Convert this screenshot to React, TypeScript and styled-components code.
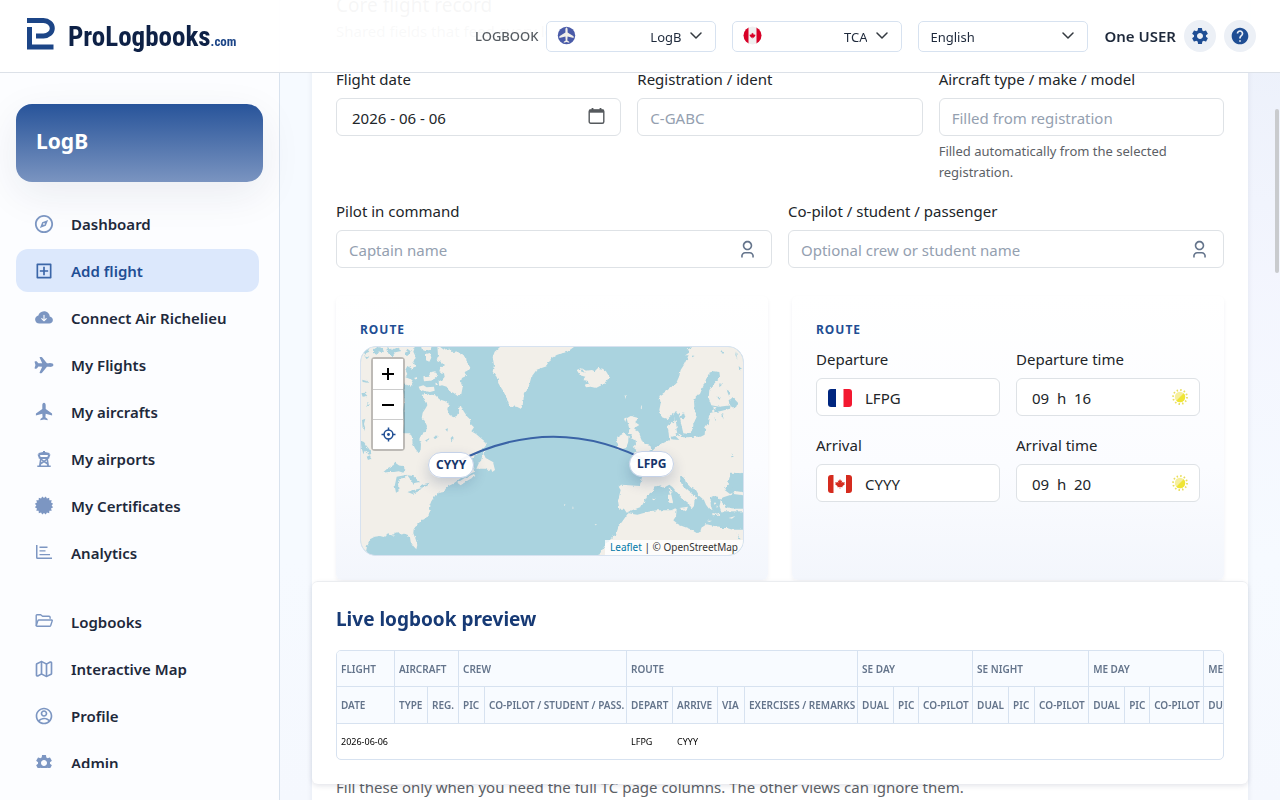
import React, { useLayoutEffect, useRef } from "react";
import styled, { createGlobalStyle } from "styled-components";
import { RiAccountCircleLine, RiAddBoxLine, RiCompass3Line, RiUser3Line } from "react-icons/ri";
import { IoAirplane } from "react-icons/io5";
import { MdSettings, MdHelp } from "react-icons/md";
import { BsCloudArrowDownFill } from "react-icons/bs";
import { Map as MapIcon } from "lucide-react";

const GlobalStyle = createGlobalStyle`
  *, *::before, *::after { box-sizing: border-box; }
  body {
    margin: 0;
    font-family: "Noto Sans", "Open Sans", sans-serif;
    font-size: 15px;
    line-height: 24px;
    color: #212529;
    background: #f6f9ff;
  }
  button, input, select { font: inherit; color: inherit; }
  h2, h3, p { margin: 0; }
`;

/* ---------- shell ---------- */

const Shell = styled.div`
  display: grid;
  grid-template-columns: 280px minmax(0, 1fr);
  height: 100vh;
  background:
    radial-gradient(circle at 100% 0, #ebf0fa, rgba(243, 245, 254, 0.9) 280px, rgba(246, 250, 255, 0) 560px),
    linear-gradient(180deg, #f6faff 70%, #f5f8fe);
`;

const Header = styled.header`
  position: fixed;
  z-index: 10;
  top: 0;
  left: 0;
  right: 0;
  height: 73px;
  display: flex;
  align-items: center;
  justify-content: space-between;
  padding: 0 24px;
  border-bottom: 1px solid #dce1e8;
  background: rgba(255, 255, 255, 0.96);
`;

const Brand = styled.a`
  display: flex;
  align-items: center;
  gap: 13px;
  padding: 6px 0 0 2px;
  text-decoration: none;
  font-family: "Roboto Condensed", "Open Sans Condensed", Roboto, sans-serif;
  font-size: 27px;
  font-weight: 700;
  line-height: 40px;
  color: #0e2146;
  > svg { margin-bottom: 12px; }
`;

const BrandSuffix = styled.span`
  font-size: 13px;
  color: #1c4587;
`;

const Tools = styled.div`
  display: flex;
  align-items: center;
  gap: 16px;
  font-size: 13px;
  color: #1e293b;
`;

const BookPicker = styled.label`
  display: flex;
  align-items: center;
  gap: 8px;
  font-weight: 500;
  color: #555b61;
`;

const Picker = styled.span`
  position: relative;
  display: block;
  width: 170px;
  > svg { position: absolute; pointer-events: none; }
  > svg:first-child { left: 11px; top: 5px; }
  > svg:last-child { right: 14px; top: 9px; }
`;

const PickerSelect = styled.select<{ $end?: boolean }>`
  display: block;
  width: 100%;
  height: 31px;
  padding: 2px 34px 0 11px;
  appearance: none;
  border: 1px solid #d7e2f0;
  border-radius: 5px;
  background: #fff;
  font-size: 13px;
  font-weight: 400;
  color: #1e293b;
  text-align-last: ${(p) => (p.$end ? "right" : "left")};
`;

const Account = styled.div`
  display: flex;
  align-items: center;
  gap: 8px;
  font-size: 15px;
  font-weight: 600;
`;

const RoundButton = styled.button`
  display: grid;
  place-items: center;
  width: 32px;
  height: 32px;
  padding: 0;
  border: 0;
  border-radius: 50%;
  background: #ecf0f6;
  color: #1f4e94;
  font-size: 20px;
`;

/* ---------- sidebar ---------- */

const Sidebar = styled.aside`
  display: flex;
  flex-direction: column;
  min-height: 0;
  padding: 104px 16px 32px;
  border-right: 1px solid #d8e2ee;
  background: #fcfdff;
`;

const BookCard = styled.div`
  flex: none;
  height: 78px;
  padding: 20px;
  border-radius: 16px;
  background: linear-gradient(180deg, #28549a, #7a94c0);
  box-shadow: 0 12px 40px rgba(30, 41, 80, 0.08);
  color: #fff;
  font-size: 21px;
  line-height: 34px;
  font-weight: 700;
`;

const Nav = styled.nav`
  flex: 1;
  min-height: 0;
  overflow: hidden;
  display: flex;
  flex-direction: column;
  gap: 4px;
  margin: 0 4px 0 0;
  padding-top: 20px;
`;

const NavLink = styled.a<{ $active?: boolean; $group?: boolean }>`
  flex: none;
  display: flex;
  align-items: center;
  gap: 17px;
  height: 43px;
  margin-top: ${(p) => (p.$group ? "22px" : "0")};
  padding: 0 18px;
  border-radius: 12px;
  background: ${(p) => (p.$active ? "#dce8fc" : "transparent")};
  color: ${(p) => (p.$active ? "#1f4e94" : "#1e293b")};
  font-weight: 600;
  text-decoration: none;
  > svg {
    flex: none;
    width: 20px;
    height: 20px;
    color: ${(p) => (p.$active ? "#3b66a8" : "#7c96c2")};
  }
`;

const NavGlyph = styled.svg`
  fill: currentColor;
`;

/* ---------- main ---------- */

const Main = styled.main`
  position: relative;
  min-height: 0;
  overflow-y: auto;
  scrollbar-width: none;
  padding: 96px 32px 16px;
`;

const ScrollThumb = styled.div`
  position: fixed;
  z-index: 5;
  right: 1px;
  top: 109px;
  width: 4px;
  height: 164px;
  border-radius: 2px;
  background: #c9cbce;
`;

const Card = styled.section`
  padding: 24px;
  border-radius: 6px;
  background: #fff;
  box-shadow: 0 2px 6px rgba(30, 41, 80, 0.08);
`;

const CardTitle = styled.h2`
  font-size: 19px;
  line-height: 28px;
  font-weight: 400;
`;

const Lead = styled.p`
  color: #5c6166;
`;

const FieldGrid = styled.div<{ $columns: number; $top?: number }>`
  display: grid;
  grid-template-columns: repeat(${(p) => p.$columns}, minmax(0, 1fr));
  gap: 16px;
  align-items: start;
  margin-top: ${(p) => p.$top ?? 0}px;
`;

const Field = styled.div`
  display: flex;
  flex-direction: column;
`;

const FieldLabel = styled.label`
  margin-bottom: 6px;
  line-height: 26px;
`;

const InputWrap = styled.div`
  position: relative;
  > svg, > button { position: absolute; }
`;

const TextInput = styled.input<{ $inset?: number }>`
  display: block;
  width: 100%;
  height: 38px;
  padding: 2px 36px 0 ${(p) => p.$inset ?? 12}px;
  border: 1px solid #dee2e6;
  border-radius: 6px;
  background: #fff;
  color: #212529;
  &::placeholder { color: #94a0b0; opacity: 1; }
`;

const EndIcon = styled.svg`
  right: 12px;
  top: 11px;
`;

const PersonIcon = styled(RiUser3Line)`
  right: 15px;
  top: 10px;
  width: 19px;
  height: 19px;
  color: #64748b;
`;

const CalendarButton = styled.button`
  right: 16px;
  top: 9px;
  width: 17px;
  height: 18px;
  padding: 0;
  border: 0;
  background: none;
  line-height: 0;
`;

const FlagIcon = styled.svg`
  left: 12px;
  top: 11px;
  border-radius: 3px;
`;

const Help = styled.small`
  margin-top: 5px;
  font-size: 13px;
  line-height: 21px;
  color: #5c6166;
`;

const RouteGrid = styled.div`
  display: grid;
  grid-template-columns: repeat(2, minmax(0, 1fr));
  gap: 24px;
  margin-top: 28px;
`;

const RoutePanel = styled.section`
  padding: 24px;
  border-radius: 6px;
  background: linear-gradient(180deg, #fff, #fbfcff 60%, #f3f6fc);
  box-shadow: 0 2px 4px rgba(30, 41, 80, 0.06);
`;

const Eyebrow = styled.h3`
  margin-bottom: 6px;
  font-size: 12px;
  line-height: 20px;
  font-weight: 700;
  letter-spacing: 1px;
  color: #1f4e94;
`;

/* ---------- map ---------- */

const MapBox = styled.div`
  position: relative;
  height: 210px;
  overflow: hidden;
  border: 1px solid #d7e2f0;
  border-radius: 16px;
  background: #aad3df;
`;

const MapDrawing = styled.svg`
  display: block;
  width: 100%;
  height: 100%;
`;

const ZoomControl = styled.div`
  position: absolute;
  left: 10px;
  top: 10px;
  display: flex;
  flex-direction: column;
  width: 34px;
  border: 2px solid rgba(0, 0, 0, 0.22);
  border-radius: 4px;
  background-clip: padding-box;
`;

const ZoomButton = styled.button`
  display: grid;
  place-items: center;
  width: 30px;
  height: 30px;
  padding: 0;
  border: 0;
  background: #fff;
  color: #1f4e94;
  & + & { border-top: 1px solid #ccc; }
`;

const AirportPin = styled.span<{ $x: number; $y: number }>`
  position: absolute;
  left: ${(p) => p.$x}px;
  top: ${(p) => p.$y}px;
  height: 26px;
  padding: 0 7px;
  border: 1px solid #c5d2e8;
  border-radius: 13px;
  background: rgba(255, 255, 255, 0.96);
  box-shadow: 0 6px 14px rgba(20, 50, 100, 0.2);
  font-size: 12px;
  line-height: 24px;
  font-weight: 700;
  color: #16356b;
`;

const Attribution = styled.div`
  position: absolute;
  right: 0;
  bottom: 0;
  padding: 0 5px;
  background: rgba(255, 255, 255, 0.8);
  font-size: 10px;
  line-height: 15px;
  color: #333;
  a { color: #0078a8; text-decoration: none; }
`;

/* ---------- preview ---------- */

const FullPageSection = styled.div`
  padding-top: 195px;
`;

const Preview = styled.section`
  position: sticky;
  bottom: 0;
  margin-top: 24px;
  padding: 24px;
  border-top: 1px solid #ebedf0;
  border-radius: 6px;
  background: #fff;
  box-shadow: 0 2px 5px rgba(30, 41, 80, 0.12);
`;

const PreviewTitle = styled.h2`
  margin-bottom: 18px;
  font-size: 19px;
  line-height: 26px;
  font-weight: 700;
  color: #173a75;
`;

const TableFrame = styled.div`
  overflow: hidden;
  border: 1px solid #d7e2f0;
  border-radius: 5px;
`;

const Table = styled.table`
  width: 1004px;
  table-layout: fixed;
  border-collapse: separate;
  border-spacing: 0;
  font-size: 9px;
  line-height: 14px;
  white-space: nowrap;
  color: #000;
  th, td { padding: 0 0 0 4px; text-align: left; }
  th {
    border-bottom: 1px solid #d7e2f0;
    border-right: 1px solid #d7e2f0;
    background: #f8fbff;
    font-size: 10px;
    font-weight: 600;
    color: #64748b;
  }
  tr { height: 36px; }
  thead tr + tr { height: 37px; }
  tbody tr { height: 35px; }
`;

const groups: [string, number][] = [
  ["FLIGHT", 1], ["AIRCRAFT", 2], ["CREW", 2], ["ROUTE", 4],
  ["SE DAY", 3], ["SE NIGHT", 3], ["ME DAY", 3], ["ME NIGHT", 3],
];

const columns: [string, number][] = [
  ["DATE", 58], ["TYPE", 33], ["REG.", 31], ["PIC", 26], ["CO-PILOT / STUDENT / PASS.", 142],
  ["DEPART", 46], ["ARRIVE", 45], ["VIA", 27], ["EXERCISES / REMARKS", 113],
  ["DUAL", 36], ["PIC", 25], ["CO-PILOT", 54],
  ["DUAL", 36], ["PIC", 26], ["CO-PILOT", 54],
  ["DUAL", 36], ["PIC", 25], ["CO-PILOT", 54],
  ["DUAL", 36], ["PIC", 26], ["CO-PILOT", 75],
];

const record: Record<number, string> = { 0: "2026-06-06", 5: "LFPG", 6: "CYYY" };

/* ---------- drawings ---------- */

const Logo = () => (
  <svg width="29" height="33" viewBox="0 0 29 33" fill="none" stroke="#1c4587" strokeWidth="5">
    <path d="M1 3.500H17.500a8.500 7.500 0 0 1 0 15.500H10" />
    <path d="M3.500 10V30H27.500" />
  </svg>
);

const Chevron = () => (
  <svg width="12" height="12" viewBox="0 0 12 12" fill="none" stroke="#343a40" strokeWidth="1.500" strokeLinecap="round" strokeLinejoin="round">
    <path d="M1 3l5 5 5-5" />
  </svg>
);

const BookBadge = () => (
  <svg width="19" height="19" viewBox="0 0 19 19">
    <circle cx="9.500" cy="9.500" r="8.700" fill="#4a5ba8" />
    <path d="M9.500 1.500c.8 0 1.100 1.200 1.100 2.600v2.400l6 3.700v1.700l-6-1.500-.3 4 1.900 1.300v1l-2.700-.6-2.700.6v-1l1.900-1.300-.3-4-6 1.500v-1.700l6-3.700V4.100c0-1.400.3-2.600 1.100-2.600z" fill="#f1efe8" />
  </svg>
);

const MAPLE = "M0-8l1.600 3 1.900-.9-.9 4.300 2.100-2 .5 1.200 2.600-.4-.9 2.500 1 .7L3.800 3.800l.5 1.500L.4 4.900V8h-.8V4.900l-3.900.4.500-1.500L-7.900.4l1-.7-.9-2.500 2.600.4.500-1.200 2.100 2-.9-4.300 1.900.9z";

const RoundCanada = () => (
  <svg width="19" height="19" viewBox="0 0 19 19">
    <clipPath id="disc"><circle cx="9.500" cy="9.500" r="9" /></clipPath>
    <g clipPath="url(#disc)">
      <path fill="#f0f0f0" d="M0 0h19v19H0z" />
      <path fill="#d80027" d="M0 0h5.500v19H0zM13.500 0H19v19h-5.500z" />
      <path fill="#d80027" transform="translate(9.500 9.700) scale(.38)" d={MAPLE} />
    </g>
  </svg>
);

const FranceFlag = () => (
  <FlagIcon width="24" height="18" viewBox="0 0 24 18">
    <path fill="#fff" d="M0 0h24v18H0z" />
    <path fill="#00267f" d="M0 0h8v18H0z" />
    <path fill="#f31830" d="M15.500 0H24v18h-8.500z" />
  </FlagIcon>
);

const CanadaFlag = () => (
  <FlagIcon width="24" height="18" viewBox="0 0 24 18">
    <path fill="#fff" d="M0 0h24v18H0z" />
    <path fill="#d52b1e" d="M0 0h5.500v18H0zM18 0h6v18h-6z" />
    <path fill="#d52b1e" transform="translate(12 9) scale(.62)" d={MAPLE} />
  </FlagIcon>
);

const Sun = () => (
  <EndIcon width="16" height="16" viewBox="0 0 16 16">
    <circle cx="8" cy="8" r="7" fill="none" stroke="#e9de5c" strokeWidth="1.800" strokeDasharray="1.500 2.165" />
    <circle cx="8" cy="8" r="5.200" fill="#f6ef9c" />
    <path d="M11.700 4.300a5.200 5.200 0 0 1-7.400 7.400z" fill="#efe534" />
  </EndIcon>
);

const Calendar = () => (
  <svg width="17" height="18" viewBox="0 0 17 18" fill="none" stroke="#55595d">
    <rect x="1.200" y="3" width="14.600" height="13.200" rx="1.500" strokeWidth="1.400" />
    <path d="M1.200 4.200h14.600" strokeWidth="3" />
    <path d="M4.500 1v3M12.500 1v3" strokeWidth="1.800" />
  </svg>
);

const Locate = () => (
  <svg width="15" height="15" viewBox="0 0 15 15" fill="none" stroke="currentColor" strokeWidth="1.500">
    <circle cx="7.500" cy="7.500" r="4.400" />
    <circle cx="7.500" cy="7.500" r="1.400" fill="currentColor" stroke="none" />
    <path d="M7.500 .5v2.800M7.500 11.700v2.800M.5 7.500h2.800M11.700 7.500h2.800" />
  </svg>
);

const Aircraft = () => (
  <NavGlyph viewBox="0 0 20 20">
    <path d="M10 .8c1 0 1.700 1.100 1.700 2.400v3.700l6 4.300q.4.300.4.800v1.500l-6.400-1.800-.3 3.500 1.900 1.500q.3.200.3.600v1L10 17.500l-3.600.8v-1q0-.4.300-.6l1.900-1.500-.3-3.500-6.400 1.800V12q0-.5.4-.8l6-4.300V3.200C8.300 1.900 9 .8 10 .8z" />
  </NavGlyph>
);

const Tower = () => (
  <NavGlyph viewBox="0 0 20 20">
    <path fillRule="evenodd" d="M9 2h2v1l4.500 1v1.600h1L15.200 9v.8H14l1 6.700h1.700V18H3.300v-1.500H5l1-6.700H4.800V9L3.500 5.600h1V4L9 3zM6 6l.6 2h6.800l.6-2zM8 10l2 1.600L12 10zM7.400 11.300l-.3 2L8.700 12.400zM12.600 11.300l-1.300 1.100 1.600.9zM10 13.500l-3 2.100v.9h6v-.9z" />
  </NavGlyph>
);

const sealPoints = Array.from({ length: 32 }, (_, i) => {
  const angle = ((i + 0.5) * Math.PI) / 16 + Math.PI / 32;
  const radius = i % 2 ? 7.6 : 9.3;
  return `${(10 + radius * Math.sin(angle)).toFixed(2)},${(9.5 - radius * Math.cos(angle)).toFixed(2)}`;
}).join(" ");

const Seal = () => (
  <NavGlyph viewBox="0 0 20 20"><polygon points={sealPoints} /></NavGlyph>
);

const BarList = () => (
  <NavGlyph viewBox="0 0 20 20">
    <path d="M2 2h1.500v12.500H18V16H3.500A1.500 1.500 0 0 1 2 14.500zM5.500 3.500h8V5h-8zM5.500 7.200h6v1.300h-6zM5.500 11H16v1.300H5.500z" />
  </NavGlyph>
);

const OpenFolder = () => (
  <svg viewBox="0 0 20 20" fill="none" stroke="currentColor" strokeWidth="1.400" strokeLinejoin="round" strokeLinecap="round">
    <path d="M2.200 13.500V3.600q0-.8.8-.8h3.700l1.800 1.500h6.600q1 0 1 1v.9" />
    <path d="M5 8h12.600q.9 0 .6.900l-1.500 4.600q-.3.800-1.100.8H3.200q-1 0-.8-.9l1.400-4.500q.3-.9 1.200-.9z" />
  </svg>
);

const MapArt = () => (
  <MapDrawing viewBox="0 0 382 208" preserveAspectRatio="xMidYMid slice" aria-label="Route map">
    <filter id="coast" x="0" y="0" width="100%" height="100%">
      <feTurbulence type="fractalNoise" baseFrequency=".28" numOctaves="2" seed="4" />
      <feDisplacementMap in="SourceGraphic" scale="3" xChannelSelector="R" yChannelSelector="G" />
    </filter>
    <g filter="url(#coast)">
    <path fill="#aad3df" d="M-8-8h398v224H-8z" />
    <g fill="#f2efe9" transform="translate(-11 -57) scale(.33333)">
      <path d="M20 150H195V171L190 185 197 200 190 215 196 228 186 236 172 228 166 240 172 252 166 262 182 268 190 282 184 290 170 286 164 276 160 300 164 330 160 360 162 400 160 430 180 430 186 440 188 460 195 475 204 487 212 480 213 462 208 447 215 432 228 424 231 408 224 392 215 385 218 368 226 356 232 346 222 330 218 318 224 308 240 314 256 316 268 328 286 334 296 342 292 358 298 374 310 382 320 378 326 366 328 352 333 345 340 362 352 380 360 388 362 402 372 412 364 424 378 432 392 444 404 454 409 465 402 474 388 484 372 500 352 520 350 540 372 532 375 545 350 556 330 566 322 572 308 582 288 592 283 606 268 608 256 616 244 634 237 652 240 668 228 684 212 694 200 706 191 718 190 730 197 748 202 765 199 778 190 768 182 755 180 742 174 735 164 731 150 734 142 727 134 729 130 737 114 733 104 742 90 738 74 740 60 748 52 764 48 785 54 810H20z" />
      <path d="M262 165l20 14 14-3 12 10 18-2 8 12 14 6 2 14 12 14-10 12-8 4 4 12-12 6-4 12 6 16-4 20-8 8-16-12-12-4-8-14-14-4-8 2-2-14 10-4 8-10-2-10-14-6 4-14 10-4-8-10-14-6 4-12z" />
      <path d="M220 262l18-2 6-14 12-2 8 14-10 8-14 6-18 2zM206 290l14-4 10 6 22-2 2 12-14 4-18-4-12-2zM192 264l10-3-2 10zM228 192l12-3 4 14-6 12-10-4zM212 165h34l-4 14-16 4-10-4zM256 278l10 3-8 6z" />
      <path d="M450 150v21l-16 14-6 16 4 24-4 20 12 16 8 24 12 18 10 22 8 22 24 4 12 6 6-22 2-26 14-18 8-30 16-22 30-10 14-24 16-10 40-14v-32z" />
      <path d="M407 478l-4 18 4 8 22 12 2 8 4 16-8 6-4-10-6 8-10-8-28 0 8-18 6-6 6-22zM322 578l22-14 28-12 4 6-24 14-20 14zM356 536l14 4-10 4z" />
      <g fill="#aad3df">
        <path d="M98 548l16-14 16-8 6-8 10 8 14 2 6 10-6 10-14-4-14 2-16 0zM140 560l12-2 20-4-6 8-14 4-8 16 2 22-8 4-4-20zM172 556l18 2 10 10 10 8-14 2-4 8-8-14zM172 606l20-6 24-6-10 10-18 8zM204 590l16-8 18-3-6 8-16 6z" />
        <path d="M32 452l10 4 8 12 8 10 6 14-8 2-8-12-8 10-6-22zM36 390l10-4-4 16 6 20-10-8zM50 500l10-4 4 10-10 4zM34 178l16-3 8 10-14 6zM72 178l10-7 16 4 4 12-12-4-8 10-10-4zM112 171l14 8 16-6 12 10-18 4-10 14-12-12zM42 196l16 4-8 8zM36 266l14 4 6 8-18-2zM34 310l10-2 8 10-14 2zM172 176l10 8-8 14-10-6zM52 340l8 3-12 8zM250 444l8-8 8 3-10 8zM228 450l10-6-4 12zM302 444l6-6 4 8-8 8zM286 418l8-3-2 10z" />
      </g>
    </g>
    <g fill="#f2efe9" transform="translate(199 -57) scale(.33333)">
      <path d="M-2 150H60L42 171 22 185-2 192zM50 240l14-6-2 10 12 4-10-14 14 8 18-2 8 4 10-10 14 2 10 8 10 16-12 20-28 14-16-4-14 2-4-8 12-4-4-8-14-2 8-10-16-4zM200 385l12-7 20 5-6 14 12 8-16 10 14 10 6 16 6 14 10 10 14 4 2 10-12 6-4 10-44 2 16-16-12-10 10-10-2-12-14-4 4-12-10-2 2-14zM174 440l18-10 14 8-2 20-6 16-24 6-6-6 8-10-8-10zM192 386l8-4-4 14zM194 314l4 4-2 10zM244 344l2 8-4 4zM10 642l8 2-8 1zM36 650l6 1-4 2zM104 702l8 2-6 2z" />
      <path d="M380 178l14-4-4 10 14-34H570V540L540 552 522 548 510 562 502 584 494 600 510 612 530 604 570 610V618L520 612 490 622 480 628 488 640 498 652 524 656 570 656V680H480L474 672 460 660 448 658 438 644 432 630 418 618 408 600 392 592 378 578 372 560 360 562 362 576 370 590 384 602 404 618 412 628 404 626 402 648 394 658 386 640 370 628 350 606 338 592 328 584 314 592 300 586 284 590 278 604 262 616 254 632 244 650 228 656 208 664 200 668 192 656 178 656 174 632 182 600 176 590 184 584 240 588 246 560 240 546 216 536 206 520 240 514 258 504 276 484 292 468 312 458 328 450 326 430 322 408 334 396 342 400 344 384 338 372 322 388 306 382 298 360 302 340 298 318 318 304 338 288 350 276 358 258 362 240 372 224 380 208 386 196 376 196 390 186z" />
      <path d="M108 810l30-49 30-28 8-24 12-16 16-23 28 4 30-8 28-5 44 0 12-6 4 4-2 20-8 12 18 14 32 12 20 12 12-4 2-12 16-10 26 6 32 4 20 6 50 0v96zM326 592l6 4 3 12-5 8zM324 614h10l5 22-9 4-6-6zM358 654l26-4-6 14zM440 692l16 0-8 4zM506 684l18-6-8 8zM276 626l12 2-8 3z" />
      <g fill="#aad3df">
        <path d="M480 664h90v50h-90z" />
        <path d="M348 362l10 14 6 28 6 26 16 2 12-12 2-18 10-22-6-18-2-28 6-16 12-6 10-24 10-24 8-16 12-4 18 2 2 14-20 24-12 16-2 24 8 22 24 4 34-4-2 10-30 8-28 4-6 16-2 16-8 12-2 22-12 6-16 0-24 2-20 0-16-10 4-20-2-16-8-22z" />
        <path d="M506 330l14-6 14 14-6 14-12 0-8-10zM478 280l8 4-8 8zM500 300l10 4-2 16zM528 184l4 26-6-16zM484 180l8 12-10-4zM536 228l10 10-8 4zM362 380l10-14 4 14-8 10zM472 320l10 2-4 8zM484 372l8 3-4 14zM464 382l4 0-2 14zM514 490l4 8 4 2-8 2zM530 730l12 18-4 0zM382 180l8 4-4 3zM396 196l8 2-8 4zM512 548l34 2-4 20 12 28-20 0-14-6-8 8-10-6z" />
        <path d="M452 622l8-4 14 2 8 14-4 16 6 18-14 2-14-12-4-16zM332 440l14-2 12 12-24-2z" />
      </g>
      <path d="M338 420l10-6 4 16-8 4-8 2zM356 432l10 4-8 8zM404 386l4-6-6 16zM456 668l20 6-16 2zM462 636l4 6-4 2zM470 646l4 4-4 4zM460 350l10 2-8 8zM456 364l8-4-4 10zM506 684l20-6-10 8z" />
    </g>
    </g>
    <path d="M90 118Q192 62 292 117" fill="none" stroke="#3a63a6" strokeWidth="2" />
  </MapDrawing>
);

const navItems: { label: string; icon: React.ReactNode; active?: boolean; group?: boolean }[][] = [
  [
    { label: "Dashboard", icon: <RiCompass3Line viewBox="1 1 22 22" /> },
    { label: "Add flight", icon: <RiAddBoxLine />, active: true },
    { label: "Connect Air Richelieu", icon: <BsCloudArrowDownFill viewBox="-1 0 18 16" /> },
    { label: "My Flights", icon: <IoAirplane /> },
    { label: "My aircrafts", icon: <Aircraft /> },
    { label: "My airports", icon: <Tower /> },
    { label: "My Certificates", icon: <Seal /> },
    { label: "Analytics", icon: <BarList /> },
  ],
  [
    { label: "Logbooks", icon: <OpenFolder />, group: true },
    { label: "Interactive Map", icon: <MapIcon /> },
    { label: "Profile", icon: <RiAccountCircleLine /> },
    { label: "Admin", icon: <MdSettings /> },
  ],
];

const legs = [
  { id: "dep", place: "Departure", time: "Departure time", code: "LFPG", value: "09  h  16", flag: <FranceFlag /> },
  { id: "arr", place: "Arrival", time: "Arrival time", code: "CYYY", value: "09  h  20", flag: <CanadaFlag /> },
];

export default function App() {
  const mainRef = useRef<HTMLElement>(null);

  useLayoutEffect(() => {
    if (mainRef.current) mainRef.current.scrollTop = 129;
  }, []);

  return (
    <>
      <GlobalStyle />
      <Shell>
        <Header>
          <Brand href="#">
            <Logo />
            <span>ProLogbooks<BrandSuffix>.com</BrandSuffix></span>
          </Brand>
          <Tools>
            <BookPicker>
              LOGBOOK
              <Picker>
                <BookBadge />
                <PickerSelect $end><option>LogB</option></PickerSelect>
                <Chevron />
              </Picker>
            </BookPicker>
            <Picker>
              <RoundCanada />
              <PickerSelect $end aria-label="Authority"><option>TCA</option></PickerSelect>
              <Chevron />
            </Picker>
            <Picker>
              <PickerSelect aria-label="Language"><option>English</option></PickerSelect>
              <Chevron />
            </Picker>
            <Account>
              One USER
              <RoundButton aria-label="Settings"><MdSettings /></RoundButton>
              <RoundButton aria-label="Help"><MdHelp /></RoundButton>
            </Account>
          </Tools>
        </Header>

        <Sidebar>
          <BookCard>LogB</BookCard>
          <Nav>
            {navItems.flat().map((item) => (
              <NavLink key={item.label} href="#" $active={item.active} $group={item.group}>
                {item.icon}
                {item.label}
              </NavLink>
            ))}
          </Nav>
        </Sidebar>

        <Main ref={mainRef}>
          <Card>
            <CardTitle>Core flight record</CardTitle>
            <Lead>Shared fields that feed every logbook.</Lead>

            <FieldGrid $columns={3} $top={23}>
              <Field>
                <FieldLabel htmlFor="date">Flight date</FieldLabel>
                <InputWrap>
                  <TextInput id="date" $inset={15} defaultValue="2026 - 06 - 06" />
                  <CalendarButton aria-label="Pick a date"><Calendar /></CalendarButton>
                </InputWrap>
              </Field>
              <Field>
                <FieldLabel htmlFor="reg">Registration / ident</FieldLabel>
                <TextInput id="reg" placeholder="C-GABC" />
              </Field>
              <Field>
                <FieldLabel htmlFor="type">Aircraft type / make / model</FieldLabel>
                <TextInput id="type" placeholder="Filled from registration" />
                <Help>Filled automatically from the selected registration.</Help>
              </Field>
            </FieldGrid>

            <FieldGrid $columns={2} $top={15}>
              <Field>
                <FieldLabel htmlFor="pic">Pilot in command</FieldLabel>
                <InputWrap>
                  <TextInput id="pic" placeholder="Captain name" />
                  <PersonIcon />
                </InputWrap>
              </Field>
              <Field>
                <FieldLabel htmlFor="crew">Co-pilot / student / passenger</FieldLabel>
                <InputWrap>
                  <TextInput id="crew" placeholder="Optional crew or student name" />
                  <PersonIcon />
                </InputWrap>
              </Field>
            </FieldGrid>

            <RouteGrid>
              <RoutePanel>
                <Eyebrow>ROUTE</Eyebrow>
                <MapBox>
                  <MapArt />
                  <ZoomControl>
                    <ZoomButton aria-label="Zoom in">
                      <svg width="14" height="14" viewBox="0 0 14 14" stroke="#000" strokeWidth="2"><path d="M1 7h12M7 1v12" /></svg>
                    </ZoomButton>
                    <ZoomButton aria-label="Zoom out">
                      <svg width="14" height="14" viewBox="0 0 14 14" stroke="#000" strokeWidth="2"><path d="M1 7h12" /></svg>
                    </ZoomButton>
                    <ZoomButton aria-label="Centre route"><Locate /></ZoomButton>
                  </ZoomControl>
                  <AirportPin $x={67} $y={105}>CYYY</AirportPin>
                  <AirportPin $x={268} $y={104}>LFPG</AirportPin>
                  <Attribution><a href="#">Leaflet</a> | © OpenStreetMap</Attribution>
                </MapBox>
              </RoutePanel>
              <RoutePanel>
                <Eyebrow>ROUTE</Eyebrow>
                <FieldGrid $columns={2}>
                  {legs.map((leg) => (
                    <React.Fragment key={leg.id}>
                      <Field>
                        <FieldLabel htmlFor={leg.id}>{leg.place}</FieldLabel>
                        <InputWrap>
                          <TextInput id={leg.id} $inset={48} defaultValue={leg.code} />
                          {leg.flag}
                        </InputWrap>
                      </Field>
                      <Field>
                        <FieldLabel htmlFor={leg.id + "-time"}>{leg.time}</FieldLabel>
                        <InputWrap>
                          <TextInput id={leg.id + "-time"} $inset={15} defaultValue={leg.value} />
                          <Sun />
                        </InputWrap>
                      </Field>
                    </React.Fragment>
                  ))}
                </FieldGrid>
              </RoutePanel>
            </RouteGrid>

            <FullPageSection>
              <Lead>Fill these only when you need the full TC page columns. The other views can ignore them.</Lead>
            </FullPageSection>
          </Card>

          <Preview>
            <PreviewTitle>Live logbook preview</PreviewTitle>
            <TableFrame>
              <Table>
                <colgroup>
                  {columns.map(([, width], i) => <col key={i} width={width} />)}
                </colgroup>
                <thead>
                  <tr>{groups.map(([name, span]) => <th key={name} colSpan={span}>{name}</th>)}</tr>
                  <tr>{columns.map(([name], i) => <th key={i}>{name}</th>)}</tr>
                </thead>
                <tbody>
                  <tr>{columns.map((_, i) => <td key={i}>{record[i]}</td>)}</tr>
                </tbody>
              </Table>
            </TableFrame>
          </Preview>
        </Main>
        <ScrollThumb />
      </Shell>
    </>
  );
}
